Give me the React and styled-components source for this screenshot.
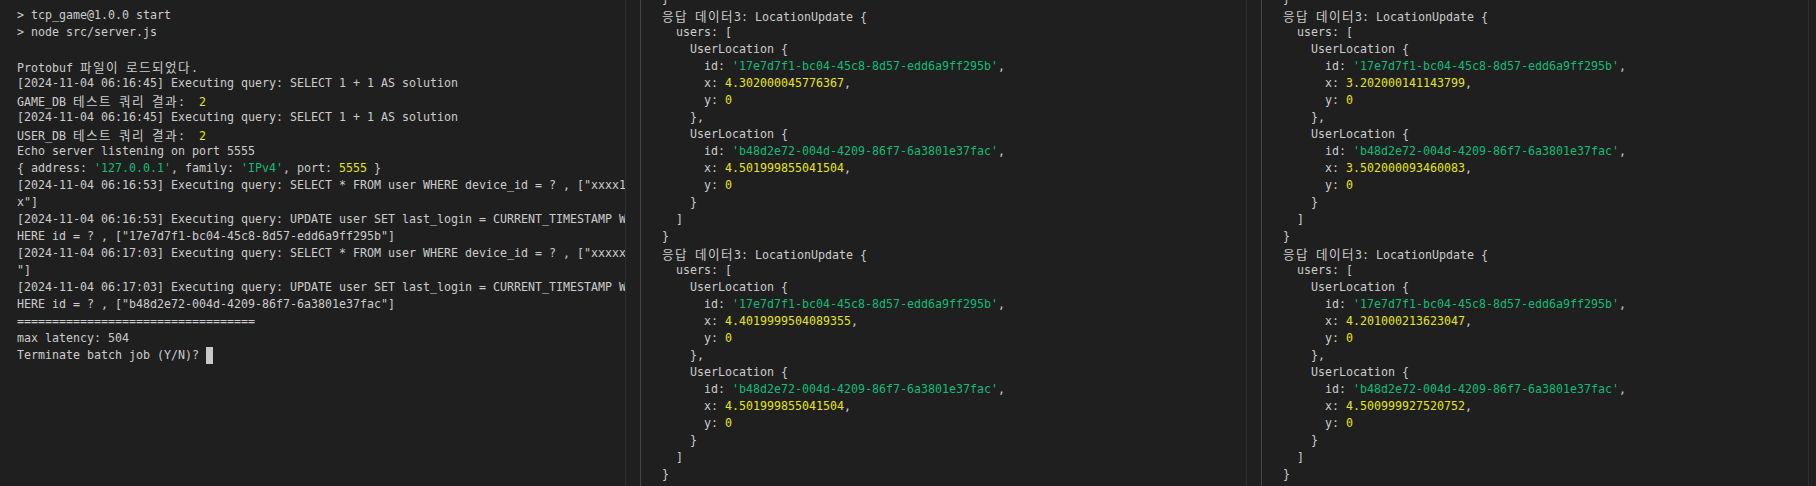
import React from 'react';
import styled, { createGlobalStyle } from 'styled-components';

const GlobalStyle = createGlobalStyle`
  html, body {
    margin: 0;
    padding: 0;
    background: #1f1f1f;
  }
`;

const ids = [
  '17e7d7f1-bc04-45c8-8d57-edd6a9ff295b',
  'b48d2e72-004d-4209-86f7-6a3801e37fac'
];

const UpdateBlock = ({ xs }) => (
  <>
    <Line>
      <Ko>응답</Ko> <Ko>데이터</Ko>3: LocationUpdate {'{'}
    </Line>
    <Line>{'  users: ['}</Line>
    {xs.map((x, i) => (
      <React.Fragment key={i}>
        <Line>{'    UserLocation {'}</Line>
        <Line>
          {'      id: '}
          <Str>'{ids[i]}'</Str>,
        </Line>
        <Line>
          {'      x: '}
          <Num>{x}</Num>,
        </Line>
        <Line>
          {'      y: '}
          <Num>0</Num>
        </Line>
        <Line>{i === xs.length - 1 ? '    }' : '    },'}</Line>
      </React.Fragment>
    ))}
    <Line>{'  ]'}</Line>
    <Line>{'}'}</Line>
  </>
);

const ServerLog = () => (
  <>
    <Line>{'> tcp_game@1.0.0 start'}</Line>
    <Line>{'> node src/server.js'}</Line>
    <Line />
    <Line>
      Protobuf <Ko>파일이</Ko> <Ko>로드되었다</Ko>.
    </Line>
    <Line>[2024-11-04 06:16:45] Executing query: SELECT 1 + 1 AS solution</Line>
    <Line>
      GAME_DB <Ko>테스트</Ko> <Ko>쿼리</Ko> <Ko>결과</Ko>:{'  '}
      <Num>2</Num>
    </Line>
    <Line>[2024-11-04 06:16:45] Executing query: SELECT 1 + 1 AS solution</Line>
    <Line>
      USER_DB <Ko>테스트</Ko> <Ko>쿼리</Ko> <Ko>결과</Ko>:{'  '}
      <Num>2</Num>
    </Line>
    <Line>Echo server listening on port 5555</Line>
    <Line>
      {'{ address: '}
      <Str>'127.0.0.1'</Str>, family: <Str>'IPv4'</Str>, port: <Num>5555</Num>
      {' }'}
    </Line>
    <Line>[2024-11-04 06:16:53] Executing query: SELECT * FROM user WHERE device_id = ? , ["xxxx1</Line>
    <Line>x"]</Line>
    <Line>[2024-11-04 06:16:53] Executing query: UPDATE user SET last_login = CURRENT_TIMESTAMP W</Line>
    <Line>HERE id = ? , ["17e7d7f1-bc04-45c8-8d57-edd6a9ff295b"]</Line>
    <Line>[2024-11-04 06:17:03] Executing query: SELECT * FROM user WHERE device_id = ? , ["xxxxx</Line>
    <Line>"]</Line>
    <Line>[2024-11-04 06:17:03] Executing query: UPDATE user SET last_login = CURRENT_TIMESTAMP W</Line>
    <Line>HERE id = ? , ["b48d2e72-004d-4209-86f7-6a3801e37fac"]</Line>
    <Line>==================================</Line>
    <Line>max latency: 504</Line>
    <Line>
      Terminate batch job (Y/N)? <Cursor />
    </Line>
  </>
);

const App = () => (
  <>
    <GlobalStyle />
    <Terminal>
      <Pane $width={641}>
        <Output $indent={17}>
          <ServerLog />
        </Output>
        <Rail $width={14} />
      </Pane>
      <Pane $width={621}>
        <Output $indent={21}>
          <Cut>{'}'}</Cut>
          <UpdateBlock xs={['4.302000045776367', '4.501999855041504']} />
          <UpdateBlock xs={['4.4019999504089355', '4.501999855041504']} />
        </Output>
        <Rail $width={14} />
      </Pane>
      <Pane $last>
        <Output $indent={21}>
          <Cut>{'}'}</Cut>
          <UpdateBlock xs={['3.202000141143799', '3.502000093460083']} />
          <UpdateBlock xs={['4.201000213623047', '4.500999927520752']} />
        </Output>
        <Rail $width={7} />
      </Pane>
    </Terminal>
  </>
);

const Terminal = styled.div`
  display: flex;
  width: 1816px;
  height: 486px;
  overflow: hidden;
  background: #1f1f1f;
  color: #cccccc;
  font-family: 'DejaVu Sans Mono', 'Liberation Mono', monospace;
  font-size: 11.63px;
`;

const Pane = styled.div`
  display: flex;
  flex: ${(p) => (p.$last ? '1 1 auto' : `0 0 ${p.$width}px`)};
  min-width: 0;
  box-sizing: border-box;
  border-right: ${(p) => (p.$last ? 'none' : '1px solid #454545')};
`;

const Output = styled.div`
  flex: 1;
  min-width: 0;
  overflow: hidden;
  padding: 7px 0 0 ${(p) => p.$indent}px;
`;

const Rail = styled.div`
  flex: 0 0 ${(p) => p.$width}px;
  border-left: 1px solid #2e2e2e;
`;

const Line = styled.div`
  height: 17px;
  line-height: 17px;
  white-space: pre;
`;

const Cut = styled(Line)`
  margin-top: -17px;
`;

const Ko = styled.span`
  font-family: 'Noto Sans CJK KR', sans-serif;
  font-size: 12.6px;
  letter-spacing: 1.4px;
`;

const Str = styled.span`
  color: #0dbc79;
`;

const Num = styled.span`
  color: #e5e510;
`;

const Cursor = styled.span`
  display: inline-block;
  width: 7px;
  height: 17px;
  vertical-align: top;
  background: #c8c8c8;
`;

export default App;
